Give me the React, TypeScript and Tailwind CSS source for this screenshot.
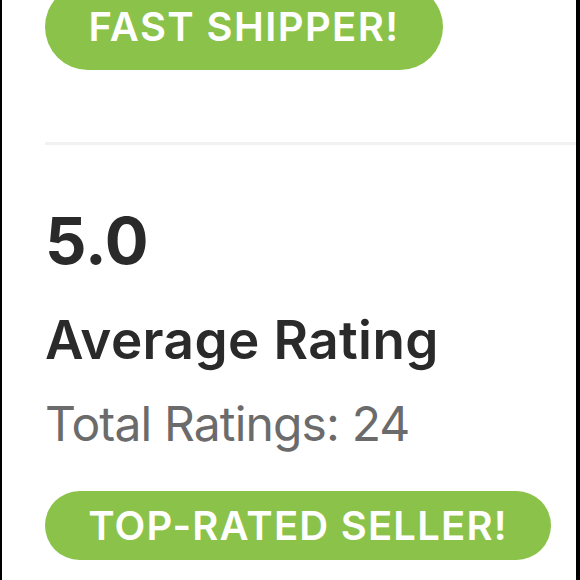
const font = { fontFamily: 'Inter, "Noto Sans", sans-serif' }

function Badge({ label, className }: { label: string; className: string }) {
  return (
    <div
      className={`flex items-center justify-center rounded-full bg-[#8bc34a] font-semibold leading-none text-white ${className}`}
    >
      {label}
    </div>
  )
}

export default function App() {
  return (
    <div className="h-[580px] w-[580px] overflow-hidden bg-black" style={font}>
      <div className="ml-[2px] mr-[4px] h-full overflow-hidden bg-white">
        <div className="pl-[43px]">
          <Badge
            label="FAST SHIPPER!"
            className="-mt-[16px] h-[86px] w-[398px] text-[40px] tracking-[1.4px]"
          />
          <div className="mt-[72px] h-[3px] bg-[#f1f1f1]" />
          <p className="mt-[63px] text-[65px] font-bold leading-none text-[#2a2a2a]">5.0</p>
          <p className="mt-[41px] text-[53px] font-semibold leading-none tracking-[0.4px] text-[#2a2a2a]">
            Average Rating
          </p>
          <p className="mt-[33px] text-[48px] leading-none tracking-[-0.85px] text-[#6b6b6b]">
            Total Ratings: 24
          </p>
          <Badge
            label="TOP-RATED SELLER!"
            className="mt-[43px] h-[69px] w-[506px] text-[40px] tracking-[1.2px]"
          />
        </div>
      </div>
    </div>
  )
}
